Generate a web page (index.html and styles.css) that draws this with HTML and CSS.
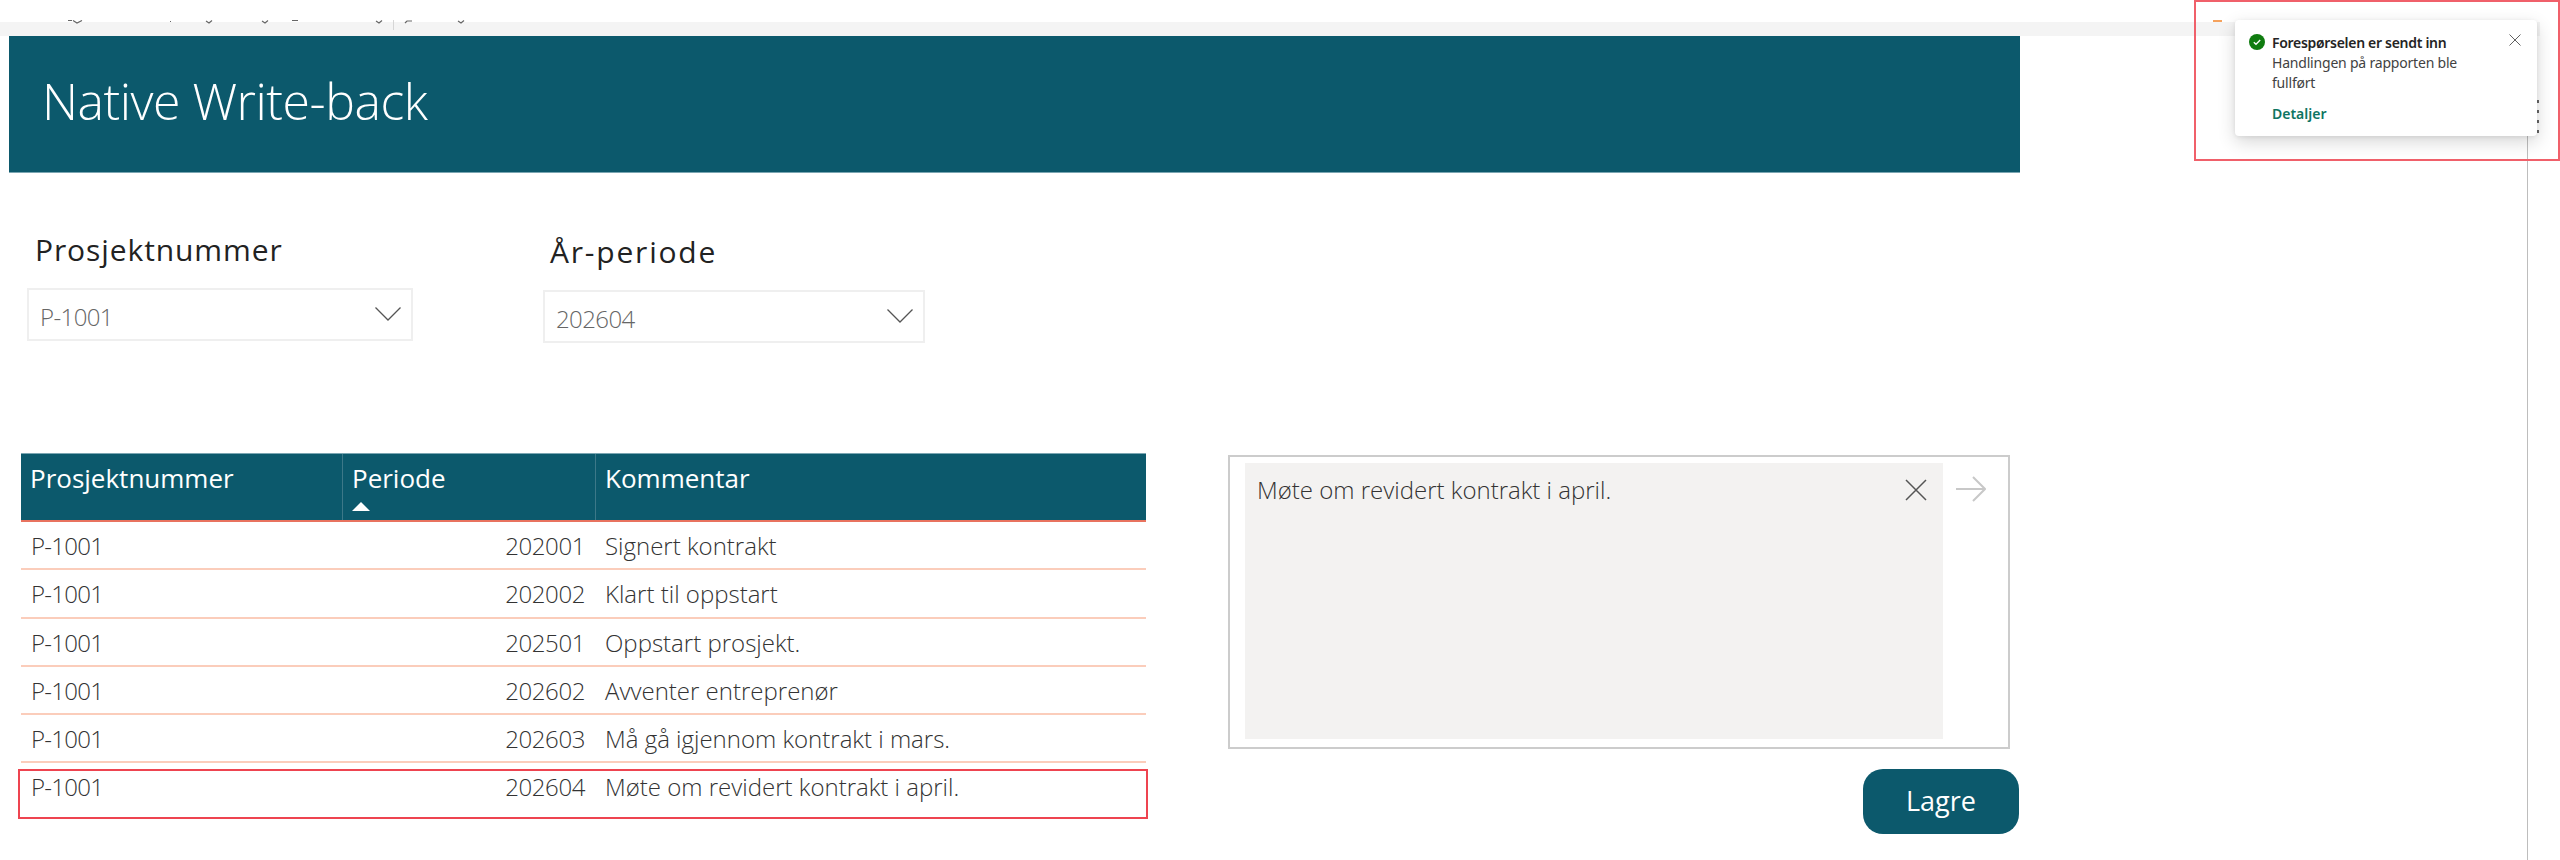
FILE: index.html
```html
<!DOCTYPE html>
<html lang="no">
<head>
<meta charset="utf-8">
<title>Native Write-back</title>
<link rel="stylesheet" href="styles.css">
</head>
<body>
<div class="page">
  <div class="ribbon">
    <svg class="ribbon-marks" width="500" height="12" viewBox="0 0 500 12">
      <path class="mark" d="M68 .5h4M73 .5l4 2.500 5-2.500M170 1.500h1M206 1l3 2 3-2.500M262 1l3 2 3-2.500M292 .5h6M376 1l3 2 3-2.500M405 3l2-2h5M458 1l3 2 3-2.500"/>
      <path class="rule" d="M393.500 0v10"/>
    </svg>
  </div>
  <header class="banner"><h1 class="banner-title">Native Write-back</h1></header>

  <section class="filters">
    <div class="slicer slicer-project">
      <div class="slicer-label">Prosjektnummer</div>
      <div class="slicer-box">
        <span class="slicer-value">P-1001</span>
        <svg class="chevron" width="26" height="14" viewBox="0 0 26 14"><path d="M.5.5 13 13 25.500.5"/></svg>
      </div>
    </div>
    <div class="slicer slicer-period">
      <div class="slicer-label">År-periode</div>
      <div class="slicer-box">
        <span class="slicer-value">202604</span>
        <svg class="chevron" width="26" height="14" viewBox="0 0 26 14"><path d="M.5.5 13 13 25.500.5"/></svg>
      </div>
    </div>
  </section>

  <section class="workspace">
    <div class="table">
      <div class="row row-head">
        <div class="cell">Prosjektnummer</div>
        <div class="cell">Periode<svg class="sort" width="18" height="9" viewBox="0 0 18 9"><path d="M9 0l9 9H0z"/></svg></div>
        <div class="cell">Kommentar</div>
      </div>
      <div class="row"><div class="cell code">P-1001</div><div class="cell num">202001</div><div class="cell">Signert kontrakt</div></div>
      <div class="row"><div class="cell code">P-1001</div><div class="cell num">202002</div><div class="cell">Klart til oppstart</div></div>
      <div class="row"><div class="cell code">P-1001</div><div class="cell num">202501</div><div class="cell">Oppstart prosjekt.</div></div>
      <div class="row"><div class="cell code">P-1001</div><div class="cell num">202602</div><div class="cell">Avventer entreprenør</div></div>
      <div class="row"><div class="cell code">P-1001</div><div class="cell num">202603</div><div class="cell">Må gå igjennom kontrakt i mars.</div></div>
      <div class="row row-last"><div class="cell code">P-1001</div><div class="cell num">202604</div><div class="cell">Møte om revidert kontrakt i april.</div></div>
      <div class="row-highlight"></div>
    </div>

    <div class="editor">
      <div class="textbox">
        <div class="input">
          <span class="input-text">Møte om revidert kontrakt i april.</span>
          <svg class="clear" width="22" height="22" viewBox="0 0 22 22"><path d="M1 1l20 20M21 1 1 21"/></svg>
        </div>
        <svg class="submit" width="30" height="26" viewBox="0 0 30 26"><path d="M0 13h29M17 1l12 12-12 12"/></svg>
      </div>
      <button class="save">Lagre</button>
    </div>
  </section>

  <div class="scroll-line"></div>
  <div class="speck"></div>
  <div class="peek"></div>
  <aside class="toast">
    <svg class="toast-icon" width="16" height="16" viewBox="0 0 16 16"><circle cx="8" cy="8" r="8"/><path d="M4.800 8.200l2.200 2.100 4.200-4.300"/></svg>
    <div class="toast-body">
      <div class="toast-title">Forespørselen er sendt inn</div>
      <div class="toast-text">Handlingen på rapporten ble fullført</div>
      <a class="toast-link">Detaljer</a>
    </div>
    <svg class="toast-close" width="12" height="12" viewBox="0 0 12 12"><path d="M.5.5l11 11M11.500.5l-11 11"/></svg>
  </aside>
  <div class="toast-highlight"></div>
</div>
</body>
</html>
```
FILE: styles.css
```css
* { box-sizing: border-box; }
html, body { margin: 0; padding: 0; background: #fff; }
body { font-family: "Open Sans", "Noto Sans", "Liberation Sans", sans-serif; color: #333; overflow: hidden; }
.page { position: relative; width: 2560px; height: 860px; overflow: hidden; }

.ribbon { margin-top: 22px; width: 2540px; height: 14px; background: #f4f4f4; }
.ribbon-marks { display: block; position: relative; top: -2px; }
.mark { fill: none; stroke: #666; stroke-width: 1.2; }
.rule { fill: none; stroke: #d6d6d6; stroke-width: 1; }

.banner { margin-left: 9px; width: 2011px; height: 137px; background: #0c596c; border-bottom: 1px solid #7ba6b2; display: flex; align-items: center; padding-left: 33px; }
.banner-title { margin: 0 0 7px; font-weight: 300; font-size: 50px; line-height: 1; color: #fff; letter-spacing: -.5px; }

.filters { display: flex; height: 280px; }
.slicer-project { margin-left: 27px; width: 386px; padding-top: 57px; }
.slicer-period { margin-left: 130px; width: 382px; padding-top: 59px; }
.slicer-label { font-size: 30px; line-height: 40px; color: #222; font-weight: 400; margin-left: 8px; height: 58px; letter-spacing: .9px; }
.slicer-period .slicer-label { margin-left: 7px; letter-spacing: 1.800px; }
.slicer-box { height: 53px; border: 2px solid #efefef; display: flex; align-items: center; justify-content: space-between; padding: 3px 10px 0 11px; }
.slicer-value { font-size: 24px; font-weight: 300; color: #666; letter-spacing: -.6px; }
.chevron path { fill: none; stroke: #555; stroke-width: 1.3; }
.chevron { margin-bottom: 5px; }

.workspace { display: flex; align-items: flex-start; }

.table { position: relative; margin: 0 0 0 21px; width: 1125px; font-size: 24px; font-weight: 300; color: #333; }
.row { display: grid; grid-template-columns: 321px 253px 1fr; height: 48.25px; border-bottom: 2px solid #fbcdbb; line-height: 48px; }
.row-head { height: 69px; background: #0c596c; border-top: 1px solid #7ba6b2; border-bottom: 2px solid #e8735f; color: #fff; font-weight: 400; font-size: 26px; line-height: 48px; }
.row-head .cell { padding-left: 9px; }
.row-head .cell + .cell { border-left: 1px solid #3d7888; }
.row-last { border-bottom: 0; }
.cell { padding: 0 10px 0 10px; white-space: nowrap; position: relative; }
.code { letter-spacing: -.7px; }
.num { text-align: right; letter-spacing: -.4px; }
.sort { position: absolute; left: 9px; top: 48px; }
.sort path { fill: #fff; }
.row-highlight { position: absolute; left: -3px; right: -2px; top: 316px; height: 50px; border: 2px solid #ee4450; }

.editor { margin-left: 82px; width: 791px; padding-top: 2px; }
.textbox { display: flex; align-items: flex-start; width: 782px; height: 294px; border: 2px solid #cccccc; padding: 6px 0 0 15px; }
.input { flex: 0 0 698px; height: 276px; background: #f3f2f1; display: flex; justify-content: space-between; align-items: flex-start; padding: 8px 16px 0 12px; }
.input-text { font-size: 24px; font-weight: 300; color: #333; line-height: 38px; }
.clear { margin-top: 8px; }
.clear path { fill: none; stroke: #555; stroke-width: 1.5; }
.submit { margin: 13px 0 0 13px; }
.submit path { fill: none; stroke: #c8c8c8; stroke-width: 2; }
.save { display: block; margin: 20px 0 0 auto; width: 156px; height: 65px; border: 0; border-radius: 20px; background: #0c596c; color: #fff; font: 400 27px "Open Sans", "Noto Sans", sans-serif; padding: 0 0 3px; }

.scroll-line { position: absolute; left: 2527px; top: 130px; bottom: 0; width: 1px; background: #bdbdbd; }
.speck { position: absolute; left: 2213px; top: 20px; width: 9px; height: 2px; background: #f5a25d; }
.peek { position: absolute; left: 2537px; top: 100px; width: 2px; height: 36px; background: repeating-linear-gradient(#666 0 3px, #fff 3px 10px); }

.toast { position: absolute; left: 2235px; top: 20px; width: 302px; height: 116px; background: #fff; border-radius: 4px; box-shadow: 0 6px 18px rgba(0,0,0,.16), 0 1px 4px rgba(0,0,0,.08); display: flex; padding: 13px 16px 0 14px; font-family: "Noto Sans", "Open Sans", sans-serif; font-size: 14px; line-height: 20px; color: #424242; }
.toast-icon { flex: none; margin: 1px 7px 0 0; }
.toast-icon circle { fill: #107c10; }
.toast-icon path { fill: none; stroke: #fff; stroke-width: 1.3; }
.toast-body { width: 205px; }
.toast-title { font-weight: 600; color: #242424; white-space: nowrap; letter-spacing: -.3px; }
.toast-text { letter-spacing: -.2px; }
.toast-link { display: block; margin-top: 11px; font-weight: 600; color: #0e7562; }
.toast-close { margin: 1px 0 0 33px; flex: none; }
.toast-close path { fill: none; stroke: #616161; stroke-width: 1; }
.toast-highlight { position: absolute; left: 2194px; top: 0; width: 366px; height: 161px; border: 2px solid #f0606a; }
```
